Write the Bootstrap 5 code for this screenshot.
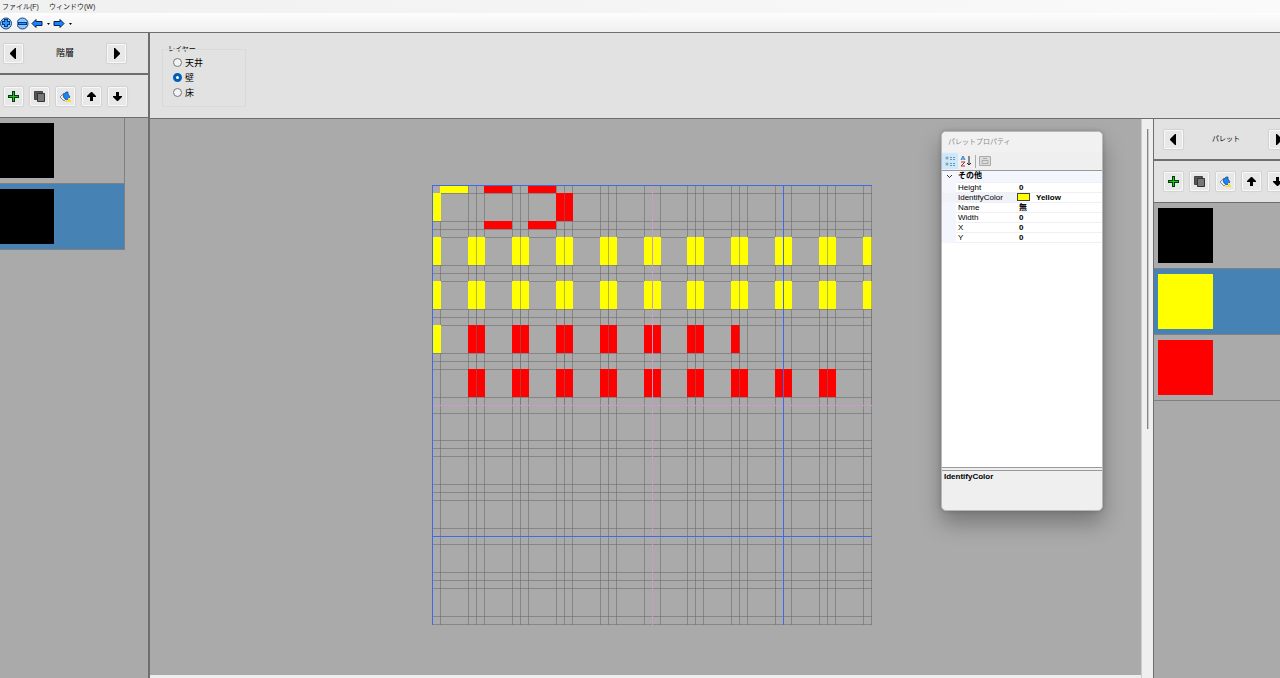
<!DOCTYPE html>
<html lang="ja">
<head>
<meta charset="utf-8">
<meta name="viewport" content="width=device-width, initial-scale=1">
<title>マップエディター</title>
<link rel="stylesheet" href="https://cdn.jsdelivr.net/npm/bootstrap@5.3.0/dist/css/bootstrap.min.css">
<style>
  :root { --line: #6e6e6e; --panel: #e2e2e2; --canvas: #aaa; --select: #4682b4; }
  body { font-family: "Liberation Sans", "Noto Sans CJK JP", sans-serif; font-size: 9px; line-height: 12px; color: #000; background: var(--canvas); overflow: hidden; }
  svg { display: block; }
  .menu-strip { height: 13px; padding-left: 2px; gap: 10px; background: linear-gradient(90deg, #f0f0f0, #fafafa); }
  .menu-strip button, .tool-strip button { border: 0; background: none; padding: 0; color: #222; font-size: 7px; line-height: 12px; }
  .tool-strip { height: 20px; padding-top: 1px; background: linear-gradient(#fdfdfd, #f0f0f0); border-bottom: 1px solid var(--line); }
  .floors { width: 150px; border-right: 2px solid var(--line); }
  .pane-head { height: 42px; background: var(--panel); border-bottom: 2px solid var(--line); }
  .pane-tools { height: 43px; background: var(--panel); border-bottom: 1px solid var(--line); gap: 7px; }
  .floors .pane-tools, .floors .pane-head { padding-left: 4px; }
  .key { width: 19px; height: 19px; padding: 0; border: 1px solid #f8f8f8; border-radius: 1px; background: #e8e8e8; box-shadow: 0 0 1px 1px #d2d2d2; display: flex; align-items: center; justify-content: center; flex: none; }
  .pane-label { flex: none; width: 84px; text-align: center; }
  .entry { height: 66px; border: 1px solid #808080; border-top-width: 0; border-left: 0; padding: 5px 0; width: 100%; background: none; display: block; }
  .entry.active { background: var(--select); }
  .swatch { width: 55px; height: 55px; display: block; }
  .floors .entry { width: 125px; }
  .floors .swatch { width: 54px; }
  .layer-bar { height: 86px; background: var(--panel); border-bottom: 1px solid var(--line); padding: 10px 12px; }
  .layer-box { width: 84px; height: 64px; position: relative; }
  .layer-box::before { content: ""; position: absolute; inset: -6px 0 0 0; border: 1px solid #dadada; }
  .layer-box legend { position: relative; float: none; width: auto; font-size: 7px; line-height: 12px; padding: 0 2px; margin: 0 0 0 4px; background: var(--panel); display: table; }
  .layer-row { position: relative; height: 15px; padding-left: 11px; gap: 3px; display: flex; align-items: center; }
  .layer-row input { appearance: none; width: 9px; height: 9px; margin: 0; border: 1px solid #777; border-radius: 50%; background: #f4f4f4; }
  .layer-row input:checked { border: 3px solid #005fb8; background: #fff; }
  .board { background: var(--canvas); min-height: 0; padding: 66px 0 0 282px; border-bottom: 3px solid #eee; position: relative; }
  .scroller { width: 13px; background: #efefef; border-left: 1px solid #ccc; border-right: 1px solid var(--line); padding: 10px 0 0 5px; }
  .thumb { width: 2px; height: 300px; background: #858585; border-right: 1px solid #c8c8c8; }
  .palette { width: 126px; overflow: hidden; }
  .palette .pane-head { padding-left: 10px; }
  .palette .pane-tools { padding-left: 10px; height: 42px; }
  .palette .pane-label { width: 86px; font-size: 7px; }
  .palette .entry { padding-left: 4px; }
  .prop-window { position: absolute; top: 12px; right: 38px; width: 162px; height: 380px; background: #efefef; border: 1px solid #b8b8b8; border-radius: 5px; box-shadow: 0 12px 22px rgba(0,0,0,.3), 0 0 4px rgba(0,0,0,.2); display: flex; flex-direction: column; overflow: hidden; }
  .prop-title { height: 20px; padding: 4px 6px; font-size: 7px; color: #8a8a8a; background: #f1f1f1; }
  .prop-tools { height: 18px; display: flex; align-items: center; }
  .prop-tools button { border: 0; padding: 0; background: none; height: 16px; width: 16px; display: flex; align-items: center; justify-content: center; }
  .prop-tools .on { background: #cce8ff; }
  .prop-sep { width: 1px; height: 13px; background: #aaa; margin: 0 1px; }
  .prop-sheet { background: #fff; border-top: 1px solid #999; border-bottom: 1px solid #999; flex: 1; }
  .prop-sheet table { width: 100%; table-layout: fixed; border-collapse: collapse; font-size: 8px; line-height: 9px; }
  .prop-sheet th, .prop-sheet td { height: 10px; padding: 0; line-height: 9px; font-weight: normal; border-bottom: 1px solid #f0f0f4; white-space: nowrap; }
  .prop-sheet td { font-weight: bold; padding-left: 2px; }
  .prop-sheet .gut { width: 14px; background: #f3f6fc; border-color: #f3f6fc; }
  .prop-sheet th { padding-left: 2px; }
  .prop-sheet .group th { background: #f3f6fc; font-weight: bold; height: 11px; line-height: 10px; }
  .prop-sheet .group .gut { padding: 0; }
  .prop-sheet .group th svg { margin: 0 auto; }
  .prop-sheet .picked th { background: #f0f2f8; }
  .chip { display: inline-block; width: 13px; height: 8px; background: #ff0; border: 1px solid #444; margin-right: 6px; vertical-align: middle; }
  .prop-help { height: 40px; margin-top: 2px; border-top: 1px solid #999; padding: 0 2px; font-weight: bold; font-size: 8px; line-height: 12px; }
</style>
<script src="https://cdn.jsdelivr.net/npm/bootstrap@5.3.0/dist/js/bootstrap.bundle.min.js"></script>
</head>
<body class="vh-100 d-flex flex-column">
<svg width="0" height="0" class="position-absolute" aria-hidden="true">
  <symbol id="i-left" viewBox="0 0 13 13"><path d="M9 1v11h-1L3 7V6l5-5z"/></symbol>
  <symbol id="i-right" viewBox="0 0 13 13"><path d="M4 1v11h1l5-5V6L5 1z"/></symbol>
  <symbol id="i-add" viewBox="0 0 13 13"><path d="M5 1h3v4h4v3H8v4H5V8H1V5h4z" fill="#053a10"/><path d="M6 2h1v4h4v1H7v4H6V7H2V6h4z" fill="#1c1"/></symbol>
  <symbol id="i-copy" viewBox="0 0 13 13"><path d="M1.500 1.500h8v8h-8z" fill="#555" stroke="#444"/><path d="M4.500 3.500h7v8h-7z" fill="#777" stroke="#333"/></symbol>
  <symbol id="i-fill" viewBox="0 0 13 13"><path d="M1 7l4-4 2 6-2 2z" fill="#eee" stroke="#567" stroke-width=".7"/><path d="M4 5l3-3h2v2l2 3-3 3-3-2z" fill="#1684ff" stroke="#246" stroke-width=".7"/><path d="M9 8h1l2 3v1H6v-1h3z" fill="#fd2"/></symbol>
  <symbol id="i-up" viewBox="0 0 13 13"><path d="M6 2h1l4 4v1H8v4H5V7H2V6z"/></symbol>
  <symbol id="i-down" viewBox="0 0 13 13"><path d="M5 2h3v4h3v1l-4 4H6L2 7V6h3z"/></symbol>
</svg>

<nav class="menu-strip d-flex flex-shrink-0" aria-label="メニュー">
  <button type="button">ファイル(F)</button>
  <button type="button">ウィンドウ(W)</button>
</nav>
<div class="tool-strip d-flex align-items-center flex-shrink-0">
  <button type="button" aria-label="拡大"><svg width="13" height="13"><circle cx="6" cy="6.500" r="5.500" fill="#8cc4ff" stroke="#124a86"/><path d="M4 2h4v2h2v4H8v2H4V8H2V4h2z" fill="#0a3c78"/><path d="M5 3h2v2h2v2H7v2H5V7H3V5h2z" fill="#2b94ff"/></svg></button>
  <button type="button" class="ms-1" aria-label="縮小"><svg width="13" height="13"><circle cx="5" cy="6.500" r="5.500" fill="#8cc4ff" stroke="#124a86" transform="translate(.5)"/><path d="M1 5h9v3H1z" fill="#0a3c78"/><path d="M2 6h7v1H2z" fill="#2b94ff"/></svg></button>
  <button type="button" aria-label="戻る"><svg width="22" height="13"><path d="M2 6.500l4-4v2h6v4H6v2z" fill="#1684ff" stroke="#024"/><path d="M17 6h3l-1.500 2z"/></svg></button>
  <button type="button" aria-label="進む"><svg width="22" height="13"><path d="M12 6.500l-4-4v2H2v4h6v2z" fill="#1684ff" stroke="#024"/><path d="M17 6h3l-1.500 2z"/></svg></button>
</div>

<div class="d-flex flex-grow-1 overflow-hidden">
  <aside class="floors flex-shrink-0">
    <div class="pane-head d-flex align-items-center">
      <button class="key" type="button" aria-label="前の階"><svg width="13" height="13"><use href="#i-left"/></svg></button>
      <span class="pane-label">階層</span>
      <button class="key" type="button" aria-label="次の階"><svg width="13" height="13"><use href="#i-right"/></svg></button>
    </div>
    <div class="pane-tools d-flex align-items-center">
      <button class="key" type="button" aria-label="追加"><svg width="13" height="13"><use href="#i-add"/></svg></button>
      <button class="key" type="button" aria-label="複製"><svg width="13" height="13"><use href="#i-copy"/></svg></button>
      <button class="key" type="button" aria-label="塗りつぶし"><svg width="13" height="13"><use href="#i-fill"/></svg></button>
      <button class="key" type="button" aria-label="上へ"><svg width="13" height="13"><use href="#i-up"/></svg></button>
      <button class="key" type="button" aria-label="下へ"><svg width="13" height="13"><use href="#i-down"/></svg></button>
    </div>
    <button type="button" class="entry" aria-label="階層 1"><span class="swatch bg-black"></span></button>
    <button type="button" class="entry active" aria-label="階層 2"><span class="swatch bg-black"></span></button>
  </aside>

  <div class="d-flex flex-column flex-grow-1 overflow-hidden">
    <div class="layer-bar flex-shrink-0">
      <fieldset class="layer-box">
        <legend>レイヤー</legend>
        <label class="layer-row"><input type="radio" name="layer">天井</label>
        <label class="layer-row"><input type="radio" name="layer" checked>壁</label>
        <label class="layer-row"><input type="radio" name="layer">床</label>
      </fieldset>
    </div>
    <div class="d-flex flex-grow-1 overflow-hidden">
      <main class="board flex-grow-1">
        <svg id="map" width="442" height="441" role="img" aria-label="マップ"></svg>
        <section class="prop-window">
          <div class="prop-title">パレットプロパティ</div>
          <div class="prop-tools">
            <button type="button" class="on" aria-label="項目別"><svg width="12" height="12"><g fill="#7a9a7a" stroke="#bcd"><circle cx="3" cy="3" r="1.500"/><circle cx="3" cy="9" r="1.500"/></g><path d="M6 2.500h2m1 0h2M6 4.500h2m1 0h2M6 8.500h2m1 0h2M6 10.500h2m1 0h2" stroke="#69a"/></svg></button>
            <button type="button" aria-label="アルファベット順"><svg width="12" height="12"><path d="M1 5l2-4 2 4M2 4h2" fill="none" stroke="#27c"/><path d="M1 7h4l-4 4h4" fill="none" stroke="#a33"/><path d="M9 1v9M7 8l2 2 2-2" fill="none" stroke="#222"/></svg></button>
            <span class="prop-sep"></span>
            <button type="button" aria-label="プロパティページ"><svg width="12" height="12"><path d="M.5 1.500h11v9H.5zM3 5.500h6v3H3zM4 3.500h4" fill="#ddd" stroke="#aaa"/></svg></button>
          </div>
          <div class="prop-sheet">
            <table>
              <colgroup><col width="14"><col width="61"><col></colgroup>
              <tbody>
              <tr class="group"><th class="gut"><svg width="7" height="5"><path d="M1 1l2.500 2.500L6 1" fill="none" stroke="#333"/></svg></th><th colspan="2">その他</th></tr>
              <tr><th class="gut"></th><th>Height</th><td>0</td></tr>
              <tr class="picked"><th class="gut"></th><th>IdentifyColor</th><td class="p-0"><span class="chip"></span>Yellow</td></tr>
              <tr><th class="gut"></th><th>Name</th><td>無</td></tr>
              <tr><th class="gut"></th><th>Width</th><td>0</td></tr>
              <tr><th class="gut"></th><th>X</th><td>0</td></tr>
              <tr><th class="gut"></th><th>Y</th><td>0</td></tr>
              </tbody>
            </table>
          </div>
          <div class="prop-help">IdentifyColor</div>
        </section>
      </main>
      <div class="scroller flex-shrink-0"><div class="thumb"></div></div>
      <aside class="palette flex-shrink-0">
        <div class="pane-head d-flex align-items-center">
          <button class="key" type="button" aria-label="前のパレット"><svg width="13" height="13"><use href="#i-left"/></svg></button>
          <span class="pane-label">パレット</span>
          <button class="key" type="button" aria-label="次のパレット"><svg width="13" height="13"><use href="#i-right"/></svg></button>
        </div>
        <div class="pane-tools d-flex align-items-center">
          <button class="key" type="button" aria-label="追加"><svg width="13" height="13"><use href="#i-add"/></svg></button>
          <button class="key" type="button" aria-label="複製"><svg width="13" height="13"><use href="#i-copy"/></svg></button>
          <button class="key" type="button" aria-label="塗りつぶし"><svg width="13" height="13"><use href="#i-fill"/></svg></button>
          <button class="key" type="button" aria-label="上へ"><svg width="13" height="13"><use href="#i-up"/></svg></button>
          <button class="key" type="button" aria-label="下へ"><svg width="13" height="13"><use href="#i-down"/></svg></button>
        </div>
        <button type="button" class="entry border-end-0" aria-label="黒"><span class="swatch bg-black"></span></button>
        <button type="button" class="entry border-end-0 active" aria-label="黄"><span class="swatch" style="background:#ff0"></span></button>
        <button type="button" class="entry border-end-0" aria-label="赤"><span class="swatch" style="background:#f00"></span></button>
      </aside>
    </div>
  </div>
</div>
<script>
  // Each map cell is one pitch wide: a wall strip, the floor, then another wall strip.
  const map = document.getElementById('map');
  const size = 439, pitch = size / 10, wall = 8;
  const Y = '#ff0', R = '#f00';
  const at = (i, part) => Math.round(i * pitch + [0, wall, pitch - wall][part]);
  function rect(x, y, w, h, fill) {
    const el = document.createElementNS('http://www.w3.org/2000/svg', 'rect');
    Object.entries({ x, y, width: w, height: h, fill }).forEach(([k, v]) => el.setAttribute(k, v));
    map.append(el);
  }
  const side = (col, row, right, c) => rect(at(col, right ? 2 : 0), at(row, 1), wall + 1, at(row, 2) - at(row, 1), c);
  const edge = (col, row, low, c) => rect(at(col, 1), at(row, low ? 2 : 0), at(col, 2) - at(col, 1), wall, c);
  const minor = 'rgba(112,112,112,.62)';
  const axis = { 0: '#4169e1', 5: '#c89cc8', 8: '#4169e1' };

  for (let i = 0; i <= 10; i++) {
    for (let p = 0; p < (i < 10 ? 3 : 1); p++) {
      if (p === 0 && axis[i]) continue;
      rect(at(i, p), 0, 1, size + 1, minor);
      rect(0, at(i, p), size + 1, 1, minor);
    }
  }
  side(0, 0, false, Y); edge(0, 0, false, Y);
  [1, 2].forEach(c => { edge(c, 0, false, R); edge(c, 0, true, R); });
  side(2, 0, true, R); side(3, 0, false, R);
  for (const row of [1, 2]) for (let c = 0; c < 10; c++) { side(c, row, false, Y); side(c, row, true, Y); }
  side(0, 3, false, Y);
  for (let c = 0; c < 7; c++) side(c, 3, true, R);
  for (let c = 1; c < 7; c++) side(c, 3, false, R);
  side(7, 3, false, 'none');
  for (let c = 0; c < 9; c++) { side(c, 4, true, R); side(c + 1, 4, false, R); }
  // Column borders stay visible through the walls; the axes go on top.
  for (let i = 1; i <= 10; i++) if (!axis[i]) rect(at(i, 0), at(1, 0), 1, at(5, 0) - at(1, 0), 'rgba(112,112,112,.5)');
  rect(at(3, 0), at(0, 1), 1, at(0, 2) - at(0, 1), 'rgba(112,112,112,.5)');
  for (const i of [5, 8, 0]) {
    rect(at(i, 0), 0, 1, size + 1, axis[i]);
    rect(0, at(i, 0), size + 1, 1, axis[i]);
  }
</script>
</body>
</html>
